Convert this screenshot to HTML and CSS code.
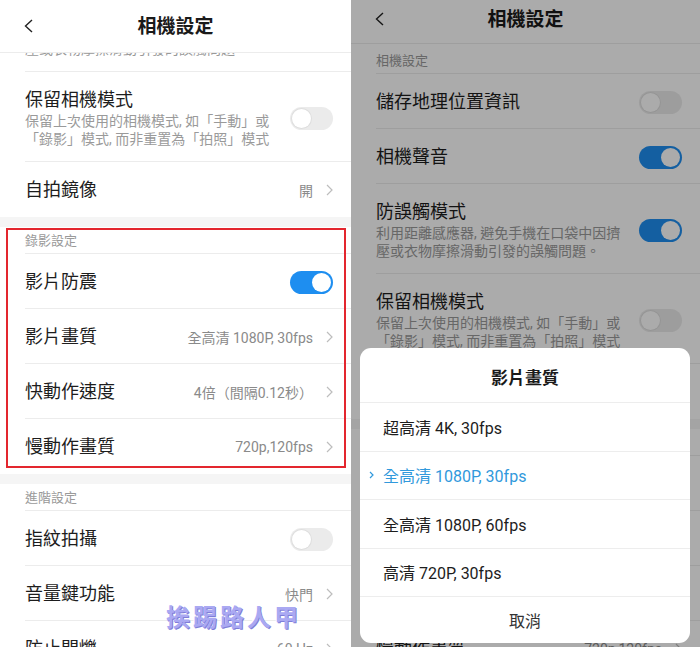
FILE: index.html
```html
<!DOCTYPE html>
<html lang="zh-Hant">
<head>
<meta charset="utf-8">
<title>相機設定</title>
<link rel="stylesheet" href="styles.css">
</head>
<body>
<div class="screen">
  <section class="pane pane-left">
    <header class="topbar">
      <span class="back"><svg width="9" height="14" viewBox="0 0 9 14"><polyline points="8,1 1.5,7 8,13" fill="none" stroke="#222" stroke-width="1.4"/></svg></span>
      <h1>相機設定</h1>
      <span></span>
    </header>
    <div class="viewport">
      <div class="scroll-left">
        <div class="group">
          <div class="row row-tall">
            <div class="txt">
              <div class="ttl">防誤觸模式</div>
              <div class="sub">利用距離感應器, 避免手機在口袋中因擠<br>壓或衣物摩擦滑動引發的誤觸問題。</div>
            </div>
            <span class="toggle on"><span class="knob"></span></span>
          </div>
          <div class="row row-tall">
            <div class="txt">
              <div class="ttl">保留相機模式</div>
              <div class="sub">保留上次使用的相機模式, 如「手動」或<br>「錄影」模式, 而非重置為「拍照」模式</div>
            </div>
            <span class="toggle"><span class="knob"></span></span>
          </div>
          <div class="row">
            <div class="txt"><div class="ttl">自拍鏡像</div></div>
            <span class="val">開</span>
            <svg class="chev" viewBox="0 0 7 12"><polyline points="1,1 6,6 1,11" fill="none" stroke="#bdbdbd" stroke-width="1.2"/></svg>
          </div>
        </div>
        <div class="band"></div>
        <div class="group">
          <div class="sect">錄影設定</div>
          <div class="row">
            <div class="txt"><div class="ttl">影片防震</div></div>
            <span class="toggle on"><span class="knob"></span></span>
          </div>
          <div class="row">
            <div class="txt"><div class="ttl">影片畫質</div></div>
            <span class="val">全高清 1080P, 30fps</span>
            <svg class="chev" viewBox="0 0 7 12"><polyline points="1,1 6,6 1,11" fill="none" stroke="#bdbdbd" stroke-width="1.2"/></svg>
          </div>
          <div class="row">
            <div class="txt"><div class="ttl">快動作速度</div></div>
            <span class="val">4倍（間隔0.12秒）</span>
            <svg class="chev" viewBox="0 0 7 12"><polyline points="1,1 6,6 1,11" fill="none" stroke="#bdbdbd" stroke-width="1.2"/></svg>
          </div>
          <div class="row">
            <div class="txt"><div class="ttl">慢動作畫質</div></div>
            <span class="val">720p,120fps</span>
            <svg class="chev" viewBox="0 0 7 12"><polyline points="1,1 6,6 1,11" fill="none" stroke="#bdbdbd" stroke-width="1.2"/></svg>
          </div>
        </div>
        <div class="band"></div>
        <div class="group">
          <div class="sect">進階設定</div>
          <div class="row">
            <div class="txt"><div class="ttl">指紋拍攝</div></div>
            <span class="toggle"><span class="knob"></span></span>
          </div>
          <div class="row">
            <div class="txt"><div class="ttl">音量鍵功能</div></div>
            <span class="val">快門</span>
            <svg class="chev" viewBox="0 0 7 12"><polyline points="1,1 6,6 1,11" fill="none" stroke="#bdbdbd" stroke-width="1.2"/></svg>
          </div>
          <div class="row">
            <div class="txt"><div class="ttl">防止閃爍</div></div>
            <span class="val">60 Hz</span>
            <svg class="chev" viewBox="0 0 7 12"><polyline points="1,1 6,6 1,11" fill="none" stroke="#bdbdbd" stroke-width="1.2"/></svg>
          </div>
        </div>
      </div>
    </div>
    <div class="redbox"></div>
    <div class="watermark">挨踢路人甲</div>
  </section>

  <section class="pane pane-right">
    <header class="topbar topbar-short">
      <span class="back"><svg width="9" height="14" viewBox="0 0 9 14"><polyline points="8,1 1.5,7 8,13" fill="none" stroke="#222" stroke-width="1.4"/></svg></span>
      <h1>相機設定</h1>
      <span></span>
    </header>
    <div class="viewport">
      <div class="group">
        <div class="sect sect-first">相機設定</div>
        <div class="row">
          <div class="txt"><div class="ttl">儲存地理位置資訊</div></div>
          <span class="toggle"><span class="knob"></span></span>
        </div>
        <div class="row">
          <div class="txt"><div class="ttl">相機聲音</div></div>
          <span class="toggle on"><span class="knob"></span></span>
        </div>
        <div class="row row-tall">
          <div class="txt">
            <div class="ttl">防誤觸模式</div>
            <div class="sub">利用距離感應器, 避免手機在口袋中因擠<br>壓或衣物摩擦滑動引發的誤觸問題。</div>
          </div>
          <span class="toggle on"><span class="knob"></span></span>
        </div>
        <div class="row row-tall">
          <div class="txt">
            <div class="ttl">保留相機模式</div>
            <div class="sub">保留上次使用的相機模式, 如「手動」或<br>「錄影」模式, 而非重置為「拍照」模式</div>
          </div>
          <span class="toggle"><span class="knob"></span></span>
        </div>
        <div class="row">
          <div class="txt"><div class="ttl">自拍鏡像</div></div>
          <span class="val">開</span>
          <svg class="chev" viewBox="0 0 7 12"><polyline points="1,1 6,6 1,11" fill="none" stroke="#bdbdbd" stroke-width="1.2"/></svg>
        </div>
      </div>
      <div class="band"></div>
      <div class="group">
        <div class="sect">錄影設定</div>
        <div class="row">
          <div class="txt"><div class="ttl">影片防震</div></div>
          <span class="toggle on"><span class="knob"></span></span>
        </div>
        <div class="row">
          <div class="txt"><div class="ttl">影片畫質</div></div>
          <span class="val">全高清 1080P, 30fps</span>
          <svg class="chev" viewBox="0 0 7 12"><polyline points="1,1 6,6 1,11" fill="none" stroke="#bdbdbd" stroke-width="1.2"/></svg>
        </div>
        <div class="row">
          <div class="txt"><div class="ttl">快動作速度</div></div>
          <span class="val">4倍（間隔0.12秒）</span>
          <svg class="chev" viewBox="0 0 7 12"><polyline points="1,1 6,6 1,11" fill="none" stroke="#bdbdbd" stroke-width="1.2"/></svg>
        </div>
        <div class="row">
          <div class="txt"><div class="ttl">慢動作畫質</div></div>
          <span class="val">720p,120fps</span>
          <svg class="chev" viewBox="0 0 7 12"><polyline points="1,1 6,6 1,11" fill="none" stroke="#bdbdbd" stroke-width="1.2"/></svg>
        </div>
      </div>
    </div>
    <div class="dim"></div>
    <div class="sheet">
      <div class="sheet-title">影片畫質</div>
      <div class="opt">超高清 4K, 30fps</div>
      <div class="opt sel"><svg width="5" height="8" viewBox="0 0 5 8"><polyline points="1,1 4,4 1,7" fill="none" stroke="#3199dc" stroke-width="1.2"/></svg>全高清 1080P, 30fps</div>
      <div class="opt">全高清 1080P, 60fps</div>
      <div class="opt">高清 720P, 30fps</div>
      <div class="cancel">取消</div>
    </div>
  </section>
</div>
</body>
</html>
```

FILE: styles.css
```css
* { box-sizing: border-box; margin: 0; padding: 0; }
html, body { width: 700px; height: 647px; overflow: hidden; background: #fff; }
body { font-family: Roboto, "Noto Sans CJK TC", sans-serif; color: #1d1d1d; }

.screen { display: flex; height: 647px; }
.pane { position: relative; overflow: hidden; display: flex; flex-direction: column; background: #fff; height: 647px; }
.pane-left { width: 351px; }
.pane-right { width: 349px; }

.topbar { display: grid; grid-template-columns: 1fr auto 1fr; align-items: center; height: 53px; border-bottom: 1px solid #ececec; flex: none; background: #fff; }
.topbar-short { height: 44px; padding-bottom: 5px; }
.back { padding-left: 24px; display: flex; }
.topbar h1 { font-size: 19px; font-weight: 700; line-height: 1; color: #1a1a1a; }

.viewport { flex: 1; overflow: hidden; }
.scroll-left { margin-top: -71px; }

.band { height: 10px; background: #f5f5f5; }
.sect { margin-left: 25px; padding: 5px 0 4px; font-size: 13px; line-height: 17px; color: #9a9a9a; border-bottom: 1px solid #ececec; }
.sect-first { padding-top: 8px; }

.row { display: flex; align-items: center; min-height: 55px; margin-left: 25px; padding-right: 18px; padding-top: 2px; border-bottom: 1px solid #ececec; }
.group .row:last-child { border-bottom-color: transparent; }
.row-tall { padding-top: 16px; padding-bottom: 13px; }
.txt { flex: 1; min-width: 0; }
.ttl { font-size: 18px; line-height: 24px; white-space: nowrap; color: #1d1d1d; }
.sub { font-size: 14px; line-height: 18px; color: #9a9a9a; white-space: nowrap; }
.val { font-size: 14px; color: #8a8a8a; margin-right: 13px; white-space: nowrap; }
.chev { width: 7px; height: 12px; flex: none; }

.toggle { width: 43px; height: 23px; border-radius: 12px; display: flex; align-items: center; padding: 0 2px; background: #ebebeb; flex: none; }
.toggle .knob { width: 19px; height: 19px; border-radius: 50%; background: #fff; box-shadow: 0 0 0 1px #dedede; }
.toggle.on { background: #1e8ef0; justify-content: flex-end; }
.toggle.on .knob { box-shadow: none; }

.redbox { position: absolute; left: 6px; top: 228px; width: 340px; height: 240px; border: 2px solid #e3262e; }
.watermark { position: absolute; left: 166px; top: 606px; font-size: 24px; line-height: 1; font-weight: 700; letter-spacing: 3px; color: #aaa9f2; text-shadow: 1px 1px 0 #7f7ed8, -1px -1px 0 #ffffff; }

.dim { position: absolute; inset: 0; background: rgba(0, 0, 0, 0.33); }
.sheet { position: absolute; left: 9px; right: 10px; bottom: 4px; background: #fff; border-radius: 11px; overflow: hidden; }
.sheet-title { height: 55px; padding-top: 3px; display: flex; align-items: center; justify-content: center; font-size: 17px; font-weight: 700; color: #1a1a1a; border-bottom: 1px solid #ededed; }
.opt { height: 48.5px; display: flex; align-items: center; padding-left: 23px; font-size: 16px; color: #1d1d1d; border-bottom: 1px solid #ededed; }
.opt.sel { color: #3199dc; padding-left: 9px; }
.opt.sel svg { margin-right: 9px; flex: none; }
.cancel { height: 46px; display: flex; align-items: center; justify-content: center; font-size: 16px; color: #333; }
```
